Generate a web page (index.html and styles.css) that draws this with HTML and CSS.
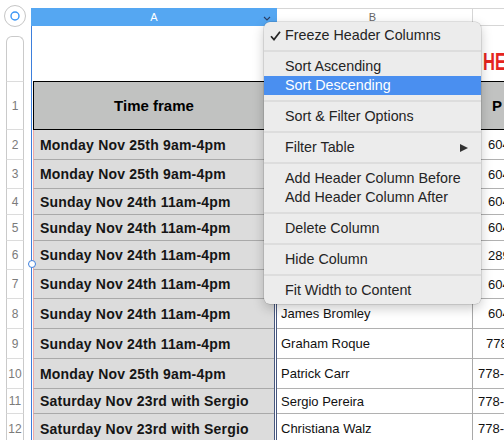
FILE: index.html
```html
<!DOCTYPE html>
<html>
<head>
<meta charset="utf-8">
<link rel="stylesheet" href="styles.css">
</head>
<body>
<div class="app">
  <div class="gutter">
    <div class="corner">
      <svg width="24" height="24" viewBox="0 0 24 24"><circle cx="12" cy="12" r="10.5" fill="#fff" stroke="#c6c6c6" stroke-width="1"/><circle cx="12" cy="12" r="4" fill="none" stroke="#3a95f5" stroke-width="1.4"/></svg>
    </div>
    <div class="strip">
      <div class="rn top"></div>
      <div class="rn h1">1</div>
      <div class="rn h2">2</div>
      <div class="rn h3">3</div>
      <div class="rn h4">4</div>
      <div class="rn h5">5</div>
      <div class="rn h6">6</div>
      <div class="rn h7">7</div>
      <div class="rn h8">8</div>
      <div class="rn h9">9</div>
      <div class="rn h10">10</div>
      <div class="rn h11">11</div>
      <div class="rn h12">12</div>
    </div>
  </div>

  <div class="sheet">
    <div class="row colhead">
      <div class="ca"><span></span><span class="lbl">A</span><svg class="chev" width="8" height="5" viewBox="0 0 8 5"><polyline points="1,1 4,4 7,1" fill="none" stroke="#2b3f66" stroke-width="1.1"/></svg></div>
      <div class="cb">B</div>
      <div class="cc"></div>
    </div>

    <div class="row r0">
      <div class="a"><div class="ai blank"></div></div>
      <div class="b blank"></div>
      <div class="c blank"><span class="title">HE</span></div>
    </div>

    <div class="row r1">
      <div class="a"><div class="ai head">Time frame</div></div>
      <div class="b head"></div>
      <div class="c head"><span class="hp">P</span></div>
    </div>

    <div class="row h2"><div class="a"><div class="ai">Monday Nov 25th 9am-4pm</div></div><div class="b"></div><div class="c"><span class="p15">604</span></div></div>
    <div class="row h3"><div class="a"><div class="ai">Monday Nov 25th 9am-4pm</div></div><div class="b"></div><div class="c"><span class="p15">604</span></div></div>
    <div class="row h4"><div class="a"><div class="ai">Sunday Nov 24th 11am-4pm</div></div><div class="b"></div><div class="c"><span class="p15">604</span></div></div>
    <div class="row h5"><div class="a"><div class="ai">Sunday Nov 24th 11am-4pm</div></div><div class="b"></div><div class="c"><span class="p15">604</span></div></div>
    <div class="row h6"><div class="a"><div class="ai">Sunday Nov 24th 11am-4pm</div></div><div class="b"></div><div class="c"><span class="p15">289</span></div></div>
    <div class="row h7"><div class="a"><div class="ai">Sunday Nov 24th 11am-4pm</div></div><div class="b"></div><div class="c"><span class="p15">604</span></div></div>
    <div class="row h8"><div class="a"><div class="ai">Sunday Nov 24th 11am-4pm</div></div><div class="b">James Bromley</div><div class="c"><span class="p15">604</span></div></div>
    <div class="row h9"><div class="a"><div class="ai">Sunday Nov 24th 11am-4pm</div></div><div class="b">Graham Roque</div><div class="c"><span class="p14">778</span></div></div>
    <div class="row h10"><div class="a"><div class="ai">Monday Nov 25th 9am-4pm</div></div><div class="b">Patrick Carr</div><div class="c"><span class="p5">778-</span></div></div>
    <div class="row h11"><div class="a"><div class="ai">Saturday Nov 23rd with Sergio</div></div><div class="b">Sergio Pereira</div><div class="c"><span class="p5">778-</span></div></div>
    <div class="row h12"><div class="a"><div class="ai">Saturday Nov 23rd with Sergio</div></div><div class="b">Christiana Walz</div><div class="c"><span class="p5">778-</span></div></div>
  </div>

  <div class="handle"></div>

  <div class="menu">
    <div class="item"><span class="mark"><svg width="11" height="10" viewBox="0 0 11 10"><polyline points="1,5.2 4,8.6 10,0.8" fill="none" stroke="#262626" stroke-width="1.7"/></svg></span><span>Freeze Header Columns</span></div>
    <div class="sep"></div>
    <div class="item"><span class="mark"></span><span>Sort Ascending</span></div>
    <div class="item sel"><span class="mark"></span><span>Sort Descending</span></div>
    <div class="sep"></div>
    <div class="item"><span class="mark"></span><span>Sort &amp; Filter Options</span></div>
    <div class="sep"></div>
    <div class="item"><span class="mark"></span><span>Filter Table</span><span class="arrow"></span></div>
    <div class="sep"></div>
    <div class="item"><span class="mark"></span><span>Add Header Column Before</span></div>
    <div class="item"><span class="mark"></span><span>Add Header Column After</span></div>
    <div class="sep"></div>
    <div class="item"><span class="mark"></span><span>Delete Column</span></div>
    <div class="sep"></div>
    <div class="item"><span class="mark"></span><span>Hide Column</span></div>
    <div class="sep"></div>
    <div class="item"><span class="mark"></span><span>Fit Width to Content</span></div>
  </div>
</div>
</body>
</html>
```

FILE: styles.css
```css
html, body {
  margin: 0;
  padding: 0;
  background: #fff;
  font-family: "Liberation Sans", Arial, sans-serif;
  overflow: hidden;
}

.app {
  position: relative;
  display: flex;
  width: 504px;
  height: 440px;
  overflow: hidden;
}

/* left gutter */
.gutter {
  width: 31px;
  flex: none;
}
.corner {
  height: 36px;
  box-sizing: border-box;
  padding: 4px 0 0 3px;
}
.corner svg { display: block; }

.strip {
  margin-left: 6px;
  width: 18px;
}
.rn {
  box-sizing: border-box;
  border-left: 1px solid #cacaca;
  border-right: 1px solid #cacaca;
  border-bottom: 1px solid #dcdcdc;
  display: flex;
  align-items: center;
  justify-content: center;
  font-size: 12px;
  color: #7b7b7b;
}
.rn.top {
  height: 46px;
  border-top: 1px solid #cacaca;
  border-radius: 6px 6px 0 0;
}
.rn.h1 { height: 48px; }

.h2 { height: 30px; }
.h3 { height: 29px; }
.h4 { height: 26px; }
.h5 { height: 26px; }
.h6 { height: 29px; }
.h7 { height: 29px; }
.h8 { height: 30px; }
.h9 { height: 30px; }
.h10 { height: 30px; }
.h11 { height: 25px; }
.h12 { height: 30px; }

/* sheet */
.sheet {
  flex: 1;
  padding-top: 8px;
  display: flex;
  flex-direction: column;
  min-width: 0;
}
.row {
  display: flex;
  box-sizing: border-box;
  flex: none;
}

.colhead { height: 18px; }
.ca {
  width: 246px;
  box-sizing: border-box;
  background: #55a7f2;
  color: #fff;
  display: grid;
  grid-template-columns: 1fr auto 1fr;
  align-items: center;
  font-size: 11px;
}
.ca .chev {
  justify-self: end;
  margin-right: 6px;
  margin-top: 3px;
}
.cb {
  width: 196px;
  box-sizing: border-box;
  border-top: 1px solid #d6d6d6;
  border-bottom: 1px solid #d6d6d6;
  border-right: 1px solid #d6d6d6;
  display: flex;
  align-items: center;
  justify-content: center;
  font-size: 11px;
  color: #666;
  padding-right: 4px;
}
.cc {
  flex: 1;
  border-top: 1px solid #d6d6d6;
  border-bottom: 1px solid #d6d6d6;
}

.r0 { height: 55px; }
.r1 { height: 49px; }

.a {
  width: 246px;
  box-sizing: border-box;
  border-left: 1px solid #3d7fdc;
  border-right: 3px double #47577f;
  padding-left: 1px;
  display: flex;
  background: #fff;
}
.ai {
  flex: 1;
  min-width: 0;
  background: #dcdcdc;
  border-left: 1px solid #eeaaa8;
  border-bottom: 1px solid #a9a9a9;
  display: flex;
  align-items: center;
  padding-left: 6px;
  font-weight: bold;
  font-size: 14px;
  letter-spacing: 0.2px;
  color: #151515;
  white-space: nowrap;
  overflow: hidden;
}
.ai.blank {
  background: #fff;
  border: 0;
}
.ai.head {
  background: #c1c2c1;
  border: 1px solid #000;
  border-right: 0;
  justify-content: center;
  padding-left: 0;
  font-size: 15px;
  letter-spacing: 0;
  color: #000;
}

.b {
  width: 196px;
  box-sizing: border-box;
  border-right: 1px solid #a9a9a9;
  border-bottom: 1px solid #b1b1b1;
  display: flex;
  align-items: center;
  padding-left: 4px;
  font-size: 13px;
  color: #111;
  white-space: nowrap;
  overflow: hidden;
}
.c {
  flex: 1;
  min-width: 0;
  border-bottom: 1px solid #b1b1b1;
  display: flex;
  align-items: center;
  font-size: 13px;
  color: #111;
  white-space: nowrap;
  overflow: hidden;
}
.b.blank, .c.blank { border-bottom: 0; }
.c.blank { align-items: flex-start; }
.b.head, .c.head {
  background: #c1c2c1;
  border-top: 1px solid #000;
  border-bottom: 1px solid #000;
}

.title {
  display: inline-block;
  margin-left: 10px;
  margin-top: 23px;
  font-size: 23px;
  line-height: 26px;
  font-weight: bold;
  color: #e52420;
  transform: scaleX(0.72);
  transform-origin: left center;
}
.hp {
  padding-left: 19px;
  font-size: 15px;
  font-weight: bold;
  color: #000;
}
.p15 { padding-left: 15px; }
.p14 { padding-left: 13px; }
.p5 { padding-left: 5px; }

/* selection handle on the column edge */
.handle {
  position: absolute;
  left: 28px;
  top: 260px;
  width: 6px;
  height: 6px;
  border: 1px solid #3d7fdc;
  border-radius: 50%;
  background: #fff;
}

/* context menu */
.menu {
  position: absolute;
  left: 264px;
  top: 22px;
  width: 217px;
  box-sizing: border-box;
  padding: 4px 0;
  background: #ececec;
  border-radius: 6px;
  box-shadow: 0 0 0 0.5px rgba(0, 0, 0, 0.18), 0 4px 12px rgba(0, 0, 0, 0.22);
  font-size: 14.3px;
  color: #242424;
}
.item {
  height: 19px;
  display: grid;
  grid-template-columns: 21px 1fr auto;
  align-items: center;
  white-space: nowrap;
  line-height: 17px;
}
.item .mark {
  padding-left: 6px;
  display: flex;
  align-items: center;
}
.item.sel {
  background: #4a8ff0;
  color: #fff;
}
.sep {
  height: 12px;
  display: flex;
  align-items: center;
}
.sep::before {
  content: "";
  display: block;
  width: 100%;
  height: 2px;
  background: #dddddd;
}
.arrow {
  width: 0;
  height: 0;
  border-left: 8px solid #333;
  border-top: 4.5px solid transparent;
  border-bottom: 4.5px solid transparent;
  margin-right: 13px;
}
```
